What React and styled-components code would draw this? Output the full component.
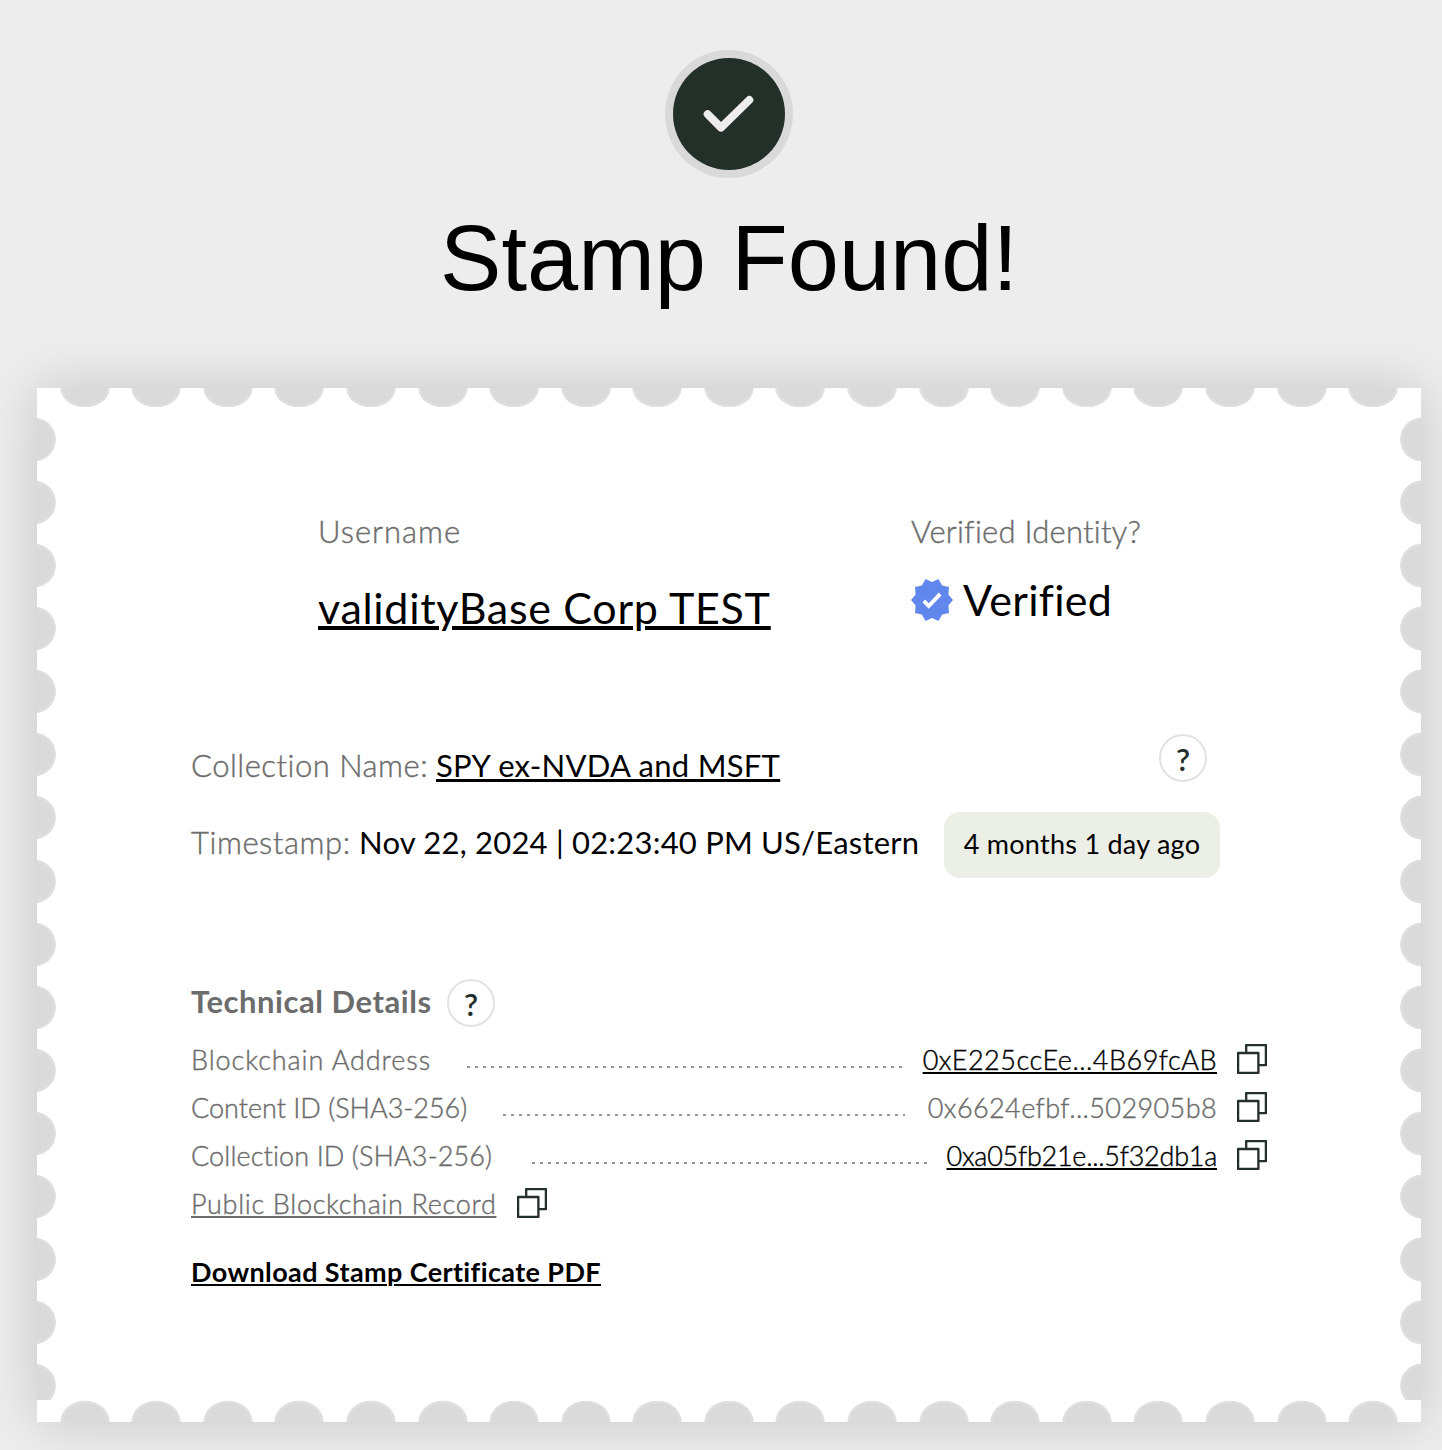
import React from 'react';
import styled, { createGlobalStyle } from 'styled-components';

const ink = '#232f29';
const grey = '#6c6c6c';
const notch = '#dadada';
const notchEdge = '#e1e1e1';

const GlobalStyle = createGlobalStyle`
  * { box-sizing: border-box; }
  body {
    margin: 0;
    background: #ededed;
    font-family: Lato, "Open Sans", sans-serif;
    color: #000;
  }
`;

const Page = styled.main`
  display: flex;
  flex-direction: column;
  align-items: center;
  height: 1450px;
  padding: 50px 21px 0 37px;
  overflow: hidden;
`;

const SuccessMark = styled.svg`
  display: block;
  width: 128px;
  height: 128px;
`;

const Heading = styled.h1`
  margin: 25px 0 75px;
  font: 400 92px/110px "Liberation Sans", Arial, sans-serif;
  white-space: nowrap;
`;

const Stamp = styled.section`
  display: grid;
  grid-template: 19px 993px 22px / 19px 1fr 21px;
  width: 1384px;
  background: #fff;
  box-shadow: 0 0 50px rgba(0, 0, 0, 0.17);
`;

const HorizontalEdge = styled.div`
  display: flex;
  grid-column: 1 / -1;
  gap: 21.58px;
  padding-left: 22.7px;
  overflow: hidden;
`;

const VerticalEdge = styled.div`
  display: flex;
  flex-direction: column;
  gap: 18.12px;
  padding-top: 9.8px;
  overflow: hidden;
`;

const notchFill = `${notch} 84%, ${notchEdge} 97%, transparent 100%`;

const TopNotch = styled.span`
  flex: none;
  width: 50px;
  background: radial-gradient(ellipse 25px 19.6px at 50% 0, ${notchFill});
`;

const BottomNotch = styled.span`
  flex: none;
  width: 50px;
  background: radial-gradient(ellipse 25px 21.6px at 50% 100%, ${notchFill});
`;

const LeftNotch = styled.span`
  flex: none;
  height: 45px;
  background: radial-gradient(circle 22.2px at -3px 50%, ${notchFill});
`;

const RightNotch = styled.span`
  flex: none;
  height: 45px;
  background: radial-gradient(circle 22.4px at 22.2px 50%, ${notchFill});
`;

const Content = styled.div`
  padding: 104px 0 0 135px;
`;

const Text = styled.span`
  font-size: ${(p) => p.$size || 31}px;
  line-height: ${(p) => p.$line || 40}px;
  font-weight: ${(p) => p.$weight || 400};
  letter-spacing: ${(p) => p.$track || 0}px;
  color: ${(p) => (p.$muted ? grey : '#000')};
  -webkit-text-stroke: ${(p) => (p.$weight === 300 ? 0.4 : 0)}px currentColor;
  white-space: pre;
  font-variant-ligatures: none;
`;

const TextLink = styled(Text).attrs({ as: 'a' })`
  text-decoration: underline;
  text-decoration-thickness: ${(p) => p.$rule || 2}px;
  text-underline-offset: ${(p) => p.$offset || 2}px;
`;

const Identity = styled.div`
  display: grid;
  grid-template-columns: 593px 1fr;
  height: 121px;
  padding-left: 127px;
`;

const Field = styled.div`
  display: flex;
  flex-direction: column;
  align-items: flex-start;
  gap: ${(p) => p.$gap}px;
`;

const VerifiedValue = styled.div`
  display: flex;
  align-items: center;
  gap: 10px;
`;

const VerifiedIcon = styled.svg`
  width: 42px;
  height: 42px;
  fill: #6287ec;
`;

const CollectionRow = styled.div`
  display: flex;
  justify-content: space-between;
  align-items: center;
  width: 1016px;
  height: 48px;
  margin-top: 102px;
`;

const CollectionText = styled.div`
  display: grid;
  grid-template-columns: 245px auto;
  padding-top: 14px;
`;

const TimestampRow = styled.div`
  display: grid;
  grid-template-columns: 168px 585px 276px;
  align-items: start;
  height: 66px;
  margin-top: 30px;
  > ${Text} { margin-top: 10px; }
`;

const AgeBadge = styled.div`
  display: flex;
  justify-content: center;
  align-items: center;
  height: 66px;
  padding-bottom: 2px;
  border-radius: 16px;
  background: #ecefe6;
`;

const Help = styled.button`
  display: flex;
  justify-content: center;
  align-items: center;
  width: 48px;
  height: 48px;
  padding: 2px 0 0;
  border: 2px solid #e2e2e2;
  border-radius: 50%;
  background: #fff;
  color: ${ink};
  font: 600 31px/40px Lato, sans-serif;
`;

const TechnicalHeader = styled.div`
  display: grid;
  grid-template-columns: 256px 48px;
  height: 48px;
  margin-top: 101px;
  > ${Text} { padding-top: 2px; }
`;

const Details = styled.div`
  display: grid;
  grid-auto-rows: 48px;
  margin-top: 9px;
`;

const DetailRow = styled.div`
  display: grid;
  grid-template-columns: ${(p) => p.$label}px ${(p) => p.$leader}px 1fr 30px;
  align-items: center;
  width: 1076px;
`;

const Leader = styled.span`
  height: 2px;
  margin-top: 14px;
  background: repeating-linear-gradient(90deg, #959595 0 2.6px, transparent 2.6px 8px);
`;

const Value = styled.span`
  display: flex;
  justify-content: flex-end;
  margin-right: 20px;
`;

const RecordRow = styled.div`
  display: grid;
  grid-template-columns: 326px 30px;
  align-items: center;
`;

const CopySvg = styled.svg`
  display: block;
  width: 30px;
  height: 30px;
  margin-top: -2px;
  fill: none;
  stroke: ${ink};
  stroke-width: 2.3;
  stroke-linejoin: round;
`;

const Download = styled.div`
  margin-top: 20px;
`;

const CopyIcon = () => (
  <CopySvg viewBox="0 0 30 30">
    <path d="M1.1 9h20.3v19.9H1.1z" />
    <path d="M9.2 9V1.1h19.7v20H21.4" />
  </CopySvg>
);

const details = [
  { label: 'Blockchain Address', track: 0.93, value: '0xE225ccEe...4B69fcAB', valueTrack: 0.5, link: true, start: 276, leader: 436 },
  { label: 'Content ID (SHA3-256)', track: 0, value: '0x6624efbf...502905b8', valueTrack: 0.4, start: 312, leader: 402 },
  { label: 'Collection ID (SHA3-256)', track: 0.12, value: '0xa05fb21e...5f32db1a', valueTrack: -0.25, link: true, start: 341, leader: 396 },
];

const repeat = (count, Part) => Array.from({ length: count }, (_, i) => <Part key={i} />);

export default function App() {
  return (
    <>
      <GlobalStyle />
      <Page>
        <SuccessMark viewBox="0 0 128 128">
          <circle cx="64" cy="64" r="64" fill="#d9d9d9" />
          <circle cx="64" cy="64" r="56" fill={ink} />
          <path d="M42.7 64.2L56 77.6L84.3 50" fill="none" stroke="#ededed" strokeWidth="8" strokeLinecap="round" strokeLinejoin="round" />
        </SuccessMark>
        <Heading>Stamp Found!</Heading>
        <Stamp>
          <HorizontalEdge>{repeat(19, TopNotch)}</HorizontalEdge>
          <VerticalEdge>{repeat(16, LeftNotch)}</VerticalEdge>
          <Content>
            <Identity>
              <Field $gap={31}>
                <Text $muted $weight={300} $track={1}>Username</Text>
                <TextLink $size={43} $line={52} $track={0.7} $rule={4} $offset={2}>validityBase Corp TEST</TextLink>
              </Field>
              <Field $gap={23}>
                <Text $muted $weight={300} $track={0.23}>Verified Identity?</Text>
                <VerifiedValue>
                  <VerifiedIcon viewBox="1 1.5 22 21" preserveAspectRatio="none">
                    <path d="M23 12l-2.44-2.79.34-3.69-3.61-.82-1.89-3.2L12 2.96 8.6 1.5 6.71 4.69 3.1 5.5l.34 3.7L1 12l2.44 2.79-.34 3.7 3.61.82L8.6 22.5l3.4-1.47 3.4 1.46 1.89-3.19 3.61-.82-.34-3.69L23 12z" />
                    <path d="M10.3 16.4L7 13.1l1.4-1.4 1.9 1.9 5.3-5.3L17 9.7z" fill="#fff" />
                  </VerifiedIcon>
                  <Text $size={43} $line={52} $track={0.3}>Verified</Text>
                </VerifiedValue>
              </Field>
            </Identity>
            <CollectionRow>
              <CollectionText>
                <Text $muted $weight={300} $track={0.5}>Collection Name:</Text>
                <TextLink $track={0.28} $rule={3}>SPY ex-NVDA and MSFT</TextLink>
              </CollectionText>
              <Help>?</Help>
            </CollectionRow>
            <TimestampRow>
              <Text $muted $weight={300} $track={0.55}>Timestamp:</Text>
              <Text $track={0.2}>Nov 22, 2024 | 02:23:40 PM US/Eastern</Text>
              <AgeBadge>
                <Text $size={27} $track={0.26}>4 months 1 day ago</Text>
              </AgeBadge>
            </TimestampRow>
            <TechnicalHeader>
              <Text $muted $weight={700} $track={0.55}>Technical Details</Text>
              <Help>?</Help>
            </TechnicalHeader>
            <Details>
              {details.map((d) => {
                const ValueText = d.link ? TextLink : Text;
                return (
                  <DetailRow key={d.label} $label={d.start} $leader={d.leader}>
                    <Text $muted $weight={300} $size={27} $line={48} $track={d.track}>{d.label}</Text>
                    <Leader />
                    <Value>
                      <ValueText $muted={!d.link} $weight={300} $size={27} $line={48} $track={d.valueTrack}>{d.value}</ValueText>
                    </Value>
                    <CopyIcon />
                  </DetailRow>
                );
              })}
              <RecordRow>
                <span>
                  <TextLink $muted $weight={300} $size={27} $line={48} $track={0.67}>Public Blockchain Record</TextLink>
                </span>
                <CopyIcon />
              </RecordRow>
            </Details>
            <Download>
              <TextLink $weight={700} $size={27} $line={48} $track={0.39}>Download Stamp Certificate PDF</TextLink>
            </Download>
          </Content>
          <VerticalEdge>{repeat(16, RightNotch)}</VerticalEdge>
          <HorizontalEdge>{repeat(19, BottomNotch)}</HorizontalEdge>
        </Stamp>
      </Page>
    </>
  );
}
